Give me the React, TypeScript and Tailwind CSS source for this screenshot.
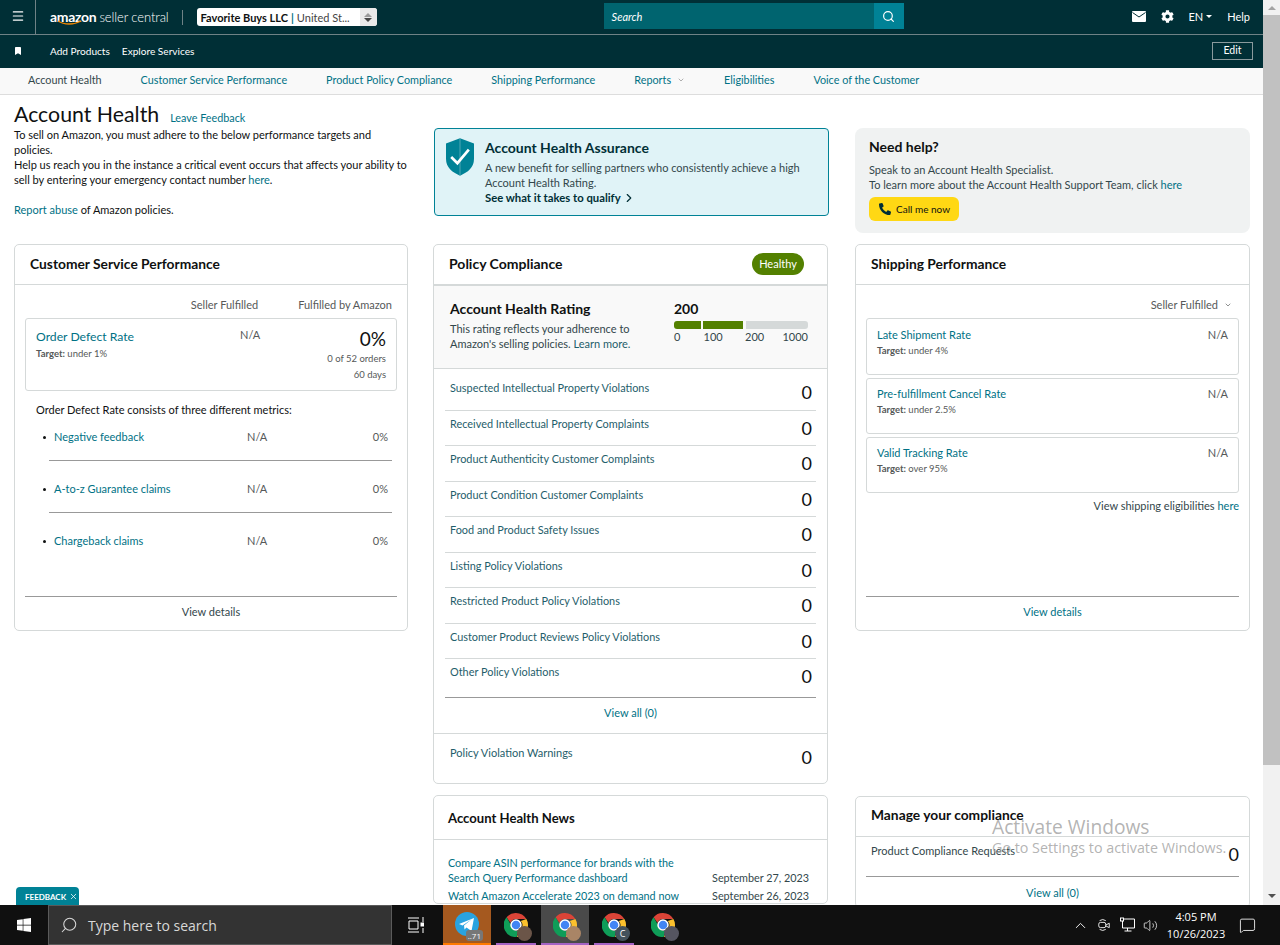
import { Menu, Search, ChevronRight, ChevronDown, ChevronUp, MessageSquare, Volume2, X } from "lucide-react";
import { FaBookmark, FaCog, FaPhoneAlt, FaWindows } from "react-icons/fa";

const policyRows = [
  "Suspected Intellectual Property Violations",
  "Received Intellectual Property Complaints",
  "Product Authenticity Customer Complaints",
  "Product Condition Customer Complaints",
  "Food and Product Safety Issues",
  "Listing Policy Violations",
  "Restricted Product Policy Violations",
  "Customer Product Reviews Policy Violations",
  "Other Policy Violations",
];

const navItems = [
  "Customer Service Performance",
  "Product Policy Compliance",
  "Shipping Performance",
];

const metrics = ["Negative feedback", "A-to-z Guarantee claims", "Chargeback claims"];

const shipping = [
  { name: "Late Shipment Rate", target: "under 4%", box: "h-[57px] pt-[8px]" },
  { name: "Pre-fulfillment Cancel Rate", target: "under 2.5%", box: "h-[56px] pt-[7px]" },
  { name: "Valid Tracking Rate", target: "over 95%", box: "h-[56px] pt-[7px]" },
];

function ChromeIcon({ badge }: { badge: string }) {
  return (
    <div className="relative h-6 w-6">
      <svg viewBox="0 0 24 24" className="h-6 w-6">
        <path d="M12 0a12 12 0 0 1 10.4 6H12a6 6 0 0 0-5.6 3.8L2.6 4.2A12 12 0 0 1 12 0z" fill="#db4437" />
        <path d="M22.4 6A12 12 0 0 1 12.6 24l4.6-8.4A6 6 0 0 0 16.8 8z" fill="#fbc02d" />
        <path d="M12.6 24A12 12 0 0 1 2.6 4.2L7 12a6 6 0 0 0 7.4 5.7z" fill="#0f9d58" />
        <circle cx="12" cy="12" r="5" fill="#4285f4" stroke="#ffffff" strokeWidth="1.5" />
      </svg>
      <div className={`absolute -bottom-1 -right-1 flex h-[15px] w-[15px] items-center justify-center rounded-full text-[9px] text-white ${badge}`}>
        {badge === "bg-[#44525c]" ? "C" : ""}
      </div>
    </div>
  );
}

export default function App() {
  return (
    <div className="flex h-[945px] w-[1280px] flex-col overflow-hidden bg-white text-[11px] leading-[15px] text-[#0f1111] [font-family:Lato,sans-serif]">
      <div className="relative flex h-[905px] overflow-hidden">
        <div className="h-full w-[1263px] shrink-0 overflow-hidden">
          <header className="flex h-[35px] items-center border-b border-[#6f8286] bg-[#002f36] text-white">
            <div className="flex h-full w-[36px] items-center justify-center border-r border-[#6f8286] pb-[2px]">
              <Menu size={14} strokeWidth={2} />
            </div>
            <div className="relative ml-[14px] flex h-full items-center leading-none">
              <span className="text-[14px] font-bold tracking-[-0.3px]">amazon</span>
              <span className="ml-[3px] text-[13px] font-light tracking-[-0.1px]">seller central</span>
              <svg viewBox="0 0 26 6" className="absolute left-[7px] top-[20px] h-[6px] w-[26px]">
                <path d="M1 1c6 4 16 4 23 0" fill="none" stroke="#f08804" strokeWidth="1.3" />
              </svg>
            </div>
            <div className="ml-[13px] h-[15px] w-px bg-[#6f8286]" />
            <div className="ml-[14px] flex h-[18px] w-[180px] items-center overflow-hidden rounded-[3px] bg-white pl-[4px] text-[11px] text-[#0f1111]">
              <span className="font-bold">Favorite Buys LLC</span>
              <span className="mx-[3px] font-bold text-[#007185]">|</span>
              <span className="text-[#444]">United St...</span>
              <div className="ml-auto flex h-full w-[17px] flex-col items-center justify-center gap-[1px] bg-[#e9e9e9] text-[#555]">
                <div className="h-0 w-0 border-x-[4px] border-b-[4px] border-x-transparent border-b-[#999]" />
                <div className="h-0 w-0 border-x-[4px] border-t-[4px] border-x-transparent border-t-[#444]" />
              </div>
            </div>
            <div className="mb-[2px] ml-[227px] flex h-[26px] w-[300px] items-center">
              <div className="flex h-full w-[270px] items-center bg-[#00646f] pl-[8px] text-[11px] italic text-white">
                Search
              </div>
              <div className="flex h-full w-[30px] items-center justify-center bg-[#008296]">
                <Search size={13} strokeWidth={2.2} />
              </div>
            </div>
            <div className="ml-auto mr-[13px] flex items-center pb-[2px] text-[11px]">
              <svg viewBox="0 0 14 11" className="h-[11px] w-[14px]">
                <rect width="14" height="11" rx="1" fill="#ffffff" />
                <path d="M0.5 1.5 7 6l6.500-4.500" fill="none" stroke="#002f36" strokeWidth="1" />
              </svg>
              <FaCog size={13} className="ml-[15px]" />
              <span className="ml-[14px]">EN</span>
              <div className="ml-[3px] h-0 w-0 border-x-[3.500px] border-t-[3.500px] border-x-transparent border-t-white" />
              <span className="ml-[15px]">Help</span>
            </div>
          </header>

          <div className="flex h-[33px] items-center bg-[#002f36] pb-[1px] text-[10.100px] text-white">
            <FaBookmark size={8} className="ml-[14px]" />
            <span className="ml-[28px]">Add Products</span>
            <span className="ml-[12px]">Explore Services</span>
            <button className="mb-[1px] ml-auto mr-[10px] flex h-[18px] w-[41px] items-center justify-center border border-[#8a9a9d] text-[10.500px] text-white">
              Edit
            </button>
          </div>

          <nav className="flex h-[27px] items-center border-b border-[#dddddd] bg-[#f9f9f9] pb-[3px] pl-[28px] text-[10.800px] text-[#007185]">
            <span className="text-[#33474b]">Account Health</span>
            {navItems.map((item) => (
              <span key={item} className="ml-[39px]">{item}</span>
            ))}
            <span className="ml-[39px] flex items-center">
              Reports
              <ChevronDown size={8} className="ml-[6px] text-[#888]" />
            </span>
            <span className="ml-[39px]">Eligibilities</span>
            <span className="ml-[39px]">Voice of the Customer</span>
          </nav>

          <div className="flex pl-[14px]">
            <div className="w-[394px] shrink-0">
              <div className="h-[149px] pt-[6px]">
                <div className="flex items-baseline">
                  <h1 className="text-[21.300px] leading-[26px]">Account Health</h1>
                  <span className="ml-[11px] text-[10.800px] text-[#007185]">Leave Feedback</span>
                </div>
                <p>To sell on Amazon, you must adhere to the below performance targets and policies.</p>
                <p>
                  Help us reach you in the instance a critical event occurs that affects your ability to sell by entering your emergency contact number <span className="text-[#007185]">here</span>.
                </p>
                <p className="mt-[15px]"><span className="text-[#007185]">Report abuse</span> of Amazon policies.</p>
              </div>

              <section className="flex h-[387px] flex-col rounded-[5px] border border-[#d5d9d9]">
                <div className="flex h-[40px] shrink-0 items-center border-b border-[#d5d9d9] pb-[2px] pl-[15px] text-[13.800px] font-bold">
                  Customer Service Performance
                </div>
                <div className="flex flex-1 flex-col px-[10px]">
                  <div className="flex h-[33px] items-center justify-end pr-[5px] pt-[6px] text-[#565959]">
                    <span>Seller Fulfilled</span>
                    <span className="ml-[40px]">Fulfilled by Amazon</span>
                  </div>
                  <div className="flex h-[73px] rounded-[3px] border border-[#d5d9d9] pl-[10px] pr-[10px]">
                    <div className="w-[204px] pt-[9px]">
                      <div className="text-[12.200px] leading-[17px] text-[#007185]">Order Defect Rate</div>
                      <div className="mt-[3px] text-[9.500px] leading-[12px] text-[#565959]"><span className="font-bold">Target:</span> under 1%</div>
                    </div>
                    <div className="flex-1 pt-[8px] text-[#565959]">N/A</div>
                    <div className="pt-[8px] text-right text-[9.500px] leading-[16px] text-[#565959]">
                      <div className="text-[19px] leading-[24px] text-[#0f1111]">0%</div>
                      <div>0 of 52 orders</div>
                      <div>60 days</div>
                    </div>
                  </div>
                  <div className="mt-[11px] pl-[11px]">Order Defect Rate consists of three different metrics:</div>
                  <ul className="mt-[12px]">
                    {metrics.map((m, i) => (
                      <li key={m} className="flex h-[52px] items-start pr-[5px]">
                        <div className="ml-[18px] mt-[7px] h-[3px] w-[3px] rounded-full bg-[#0f1111]" />
                        <div className={`ml-[3px] flex h-[32px] flex-1 pl-[5px] pr-[4px] ${i < 2 ? "border-b border-[#999]" : ""}`}>
                          <span className="w-[193px] text-[#007185]">{m}</span>
                          <span className="w-[125px] text-[#565959]">N/A</span>
                          <span className="flex-1 text-right text-[#565959]">0%</span>
                        </div>
                      </li>
                    ))}
                  </ul>
                  <div className="mt-auto flex h-[34px] items-center justify-center border-t border-[#999] pb-[4px] text-[#33474b]">View details</div>
                </div>
              </section>
            </div>

            <div className="ml-[25px] w-[395px] shrink-0">
              <div className="-mr-[1px] ml-[1px] mt-[33px] flex h-[88px] rounded-[4px] border border-[#008296] bg-[#e0f3f7] pl-[11px] pt-[9px]">
                <svg viewBox="0 0 27 36" className="h-[38px] w-[28px] shrink-0">
                  <path d="M13.500 0 27 5v15c0 8-6 13-13.500 16C6 33 0 28 0 20V5z" fill="#008296" />
                  <path d="M13.500 0v36" stroke="#7fc0ca" strokeWidth="0.6" />
                  <path d="M5 18l6 6 11-13" fill="none" stroke="#ffffff" strokeWidth="2.600" />
                </svg>
                <div className="ml-[11px]">
                  <div className="text-[14px] font-bold leading-[19px] text-[#002f36]">Account Health Assurance</div>
                  <p className="mt-[3px] text-[#33474b]">A new benefit for selling partners who consistently achieve a high Account Health Rating.</p>
                  <div className="flex items-center text-[11.300px] font-bold text-[#002f36]">
                    See what it takes to qualify
                    <ChevronRight size={14} className="ml-[1px]" />
                  </div>
                </div>
              </div>

              <section className="mt-[28px] flex h-[540px] flex-col rounded-[5px] border border-[#d5d9d9]">
                <div className="flex h-[41px] shrink-0 items-center justify-between border-b-2 border-[#d5d9d9] pb-[2px] pl-[15px] pr-[23px]">
                  <span className="text-[14px] font-bold">Policy Compliance</span>
                  <span className="flex h-[22px] w-[52px] items-center justify-center rounded-full bg-[#538000] text-white">Healthy</span>
                </div>
                <div className="flex h-[83px] shrink-0 border-b border-[#d5d9d9] bg-[#f9f9f9] pl-[16px] pt-[13px]">
                  <div className="w-[224px]">
                    <div className="text-[14px] font-bold leading-[19px]">Account Health Rating</div>
                    <p className="mt-[3px] w-[195px] text-[#33474b]">This rating reflects your adherence to Amazon&apos;s selling policies. <span className="text-[#1f5e6b]">Learn more.</span></p>
                  </div>
                  <div className="w-[134px]">
                    <div className="text-[14px] font-bold leading-[19px]">200</div>
                    <div className="mt-[3px] flex h-[8px] gap-[2px]">
                      <div className="w-[27px] rounded-l-[3px] bg-[#538000]" />
                      <div className="w-[40px] bg-[#538000]" />
                      <div className="ml-[1px] flex-1 rounded-r-[3px] bg-[#d5d9d9]" />
                    </div>
                    <div className="flex text-[#33474b]">
                      <span className="w-[30px]">0</span>
                      <span className="w-[42px]">100</span>
                      <span className="w-[38px]">200</span>
                      <span>1000</span>
                    </div>
                  </div>
                </div>
                <div className="mx-[11px] mt-[6px] border-b border-[#999]">
                  {policyRows.map((row, i) => (
                    <div key={row} className={`flex h-[35.500px] items-start justify-between pl-[5px] ${i < 8 ? "border-b border-[#d5d9d9]" : ""}`}>
                      <span className="pt-[5px] text-[10.900px] text-[#1f5e6b]">{row}</span>
                      <span className="pr-[4px] pt-[7px] text-[18px] leading-[20px]">0</span>
                    </div>
                  ))}
                  <div className="h-[2px]" />
                </div>
                <div className="flex h-[36px] shrink-0 items-center justify-center border-b border-[#d5d9d9] pb-[6px] text-[#007185]">View all (0)</div>
                <div className="flex flex-1 items-start justify-between pl-[16px] pr-[15px]">
                  <span className="pt-[11px] text-[#1f5e6b]">Policy Violation Warnings</span>
                  <span className="pt-[13px] text-[18px] leading-[20px]">0</span>
                </div>
              </section>

              <section className="mt-[11px] rounded-[5px] border border-[#d5d9d9]">
                <div className="flex h-[44px] items-center border-b border-[#d5d9d9] pl-[14px] pt-[2px] text-[13.100px] font-bold">Account Health News</div>
                <div className="px-[14px] pt-[15px] text-[10.800px] text-[#007185]">
                  <div className="flex items-end justify-between">
                    <span className="w-[240px]">Compare ASIN performance for brands with the Search Query Performance dashboard</span>
                    <span className="mr-[4px] text-[#33474b]">September 27, 2023</span>
                  </div>
                  <div className="mt-[3px] flex justify-between">
                    <span>Watch Amazon Accelerate 2023 on demand now</span>
                    <span className="mr-[4px] text-[#33474b]">September 26, 2023</span>
                  </div>
                </div>
              </section>
            </div>

            <div className="ml-[27px] w-[395px] shrink-0">
              <div className="mt-[33px] h-[105px] rounded-[8px] bg-[#f0f2f2] pl-[14px] pt-[9px] text-[#0f1111]">
                <div className="text-[14px] font-bold leading-[19px]">Need help?</div>
                <p className="mt-[6px] text-[#33474b]">Speak to an Account Health Specialist.</p>
                <p className="text-[#33474b]">To learn more about the Account Health Support Team, click <span className="text-[#007185]">here</span></p>
                <button className="mt-[5px] flex h-[24px] w-[90px] items-center rounded-[6px] bg-[#ffd814] pl-[10px] text-[10px] text-[#0f1111]">
                  <FaPhoneAlt size={12} className="text-[#002f36]" />
                  <span className="ml-[5px]">Call me now</span>
                </button>
              </div>

              <section className="mt-[11px] flex h-[387px] flex-col rounded-[5px] border border-[#d5d9d9]">
                <div className="flex h-[40px] shrink-0 items-center border-b border-[#d5d9d9] pb-[2px] pl-[15px] text-[13.800px] font-bold">Shipping Performance</div>
                <div className="flex flex-1 flex-col px-[10px]">
                  <div className="flex h-[33px] items-center justify-end pr-[7px] pt-[6px] text-[#565959]">
                    Seller Fulfilled
                    <ChevronDown size={8} className="ml-[6px]" />
                  </div>
                  <div className="flex flex-col gap-[3px]">
                    {shipping.map((s) => (
                      <div key={s.name} className={`flex justify-between rounded-[3px] border border-[#d5d9d9] pl-[10px] pr-[10px] ${s.box}`}>
                        <div>
                          <div className="text-[#007185]">{s.name}</div>
                          <div className="mt-[3px] text-[9.500px] leading-[12px] text-[#565959]"><span className="font-bold">Target:</span> {s.target}</div>
                        </div>
                        <span className="text-[#565959]">N/A</span>
                      </div>
                    ))}
                  </div>
                  <div className="mt-[5px] text-right text-[#33474b]">View shipping eligibilities <span className="text-[#007185]">here</span></div>
                  <div className="mt-auto flex h-[34px] items-center justify-center border-t border-[#999] pb-[4px] text-[#007185]">View details</div>
                </div>
              </section>

              <section className="mt-[165px] rounded-[5px] border border-[#d5d9d9]">
                <div className="flex h-[40px] items-center border-b border-[#d5d9d9] pb-[4px] pl-[15px] text-[13.800px] font-bold">Manage your compliance</div>
                <div className="px-[10px]">
                  <div className="flex h-[40px] items-start justify-between border-b border-[#999] pl-[5px]">
                    <span className="pt-[6px] text-[#33474b]">Product Compliance Requests</span>
                    <span className="pt-[7px] text-[18px] leading-[20px]">0</span>
                  </div>
                  <div className="flex h-[30px] items-center justify-center text-[#007185]">View all (0)</div>
                </div>
              </section>
            </div>
          </div>
        </div>

        <div className="flex h-full w-[17px] shrink-0 flex-col bg-[#f1f1f1]">
          <div className="flex h-[15px] items-center justify-center">
            <div className="h-0 w-0 border-x-[4px] border-b-[4px] border-x-transparent border-b-[#a3a3a3]" />
          </div>
          <div className="h-[750px] bg-[#c1c1c1]" />
          <div className="mt-auto flex h-[19px] items-center justify-center">
            <div className="h-0 w-0 border-x-[4px] border-t-[4px] border-x-transparent border-t-[#505050]" />
          </div>
        </div>

        <div className="absolute bottom-0 left-[16px] flex h-[18px] w-[63px] items-center rounded-t-[4px] bg-[#008296] pl-[9px] pt-[1px] text-[8px] font-bold leading-none text-white">
          FEEDBACK
          <X size={9} className="ml-[3px]" />
        </div>

        <div className="absolute left-[992px] top-[815px] text-[19.200px] leading-[24px] text-[#a0a0a0]/80 [font-family:'Open_Sans',sans-serif]">Activate Windows</div>
        <div className="absolute left-[992px] top-[839px] text-[14.300px] leading-[18px] text-[#a0a0a0]/80 [font-family:'Open_Sans',sans-serif]">Go to Settings to activate Windows.</div>
      </div>

      <footer className="flex h-[40px] shrink-0 items-center bg-[#101010] text-white [font-family:'Open_Sans',sans-serif]">
        <div className="flex h-full w-[48px] items-center justify-center">
          <FaWindows size={16} />
        </div>
        <div className="flex h-full w-[344px] items-center border border-[#5a5a5a] bg-[#333333] pl-[11px] text-[14px] text-[#d8d8d8]">
          <Search size={18} strokeWidth={1.4} className="-scale-x-100" />
          <span className="ml-[10px]">Type here to search</span>
        </div>
        <div className="flex h-full w-[51px] items-center justify-center pr-[3px]">
          <svg viewBox="0 0 16 16" className="h-[16px] w-[16px]" fill="none" stroke="#ffffff" strokeWidth="1">
            <path d="M0 1h11M0 15h11M1 4h9v8H1zM15 0v5M15 11v5" />
            <rect x="13" y="6" width="3" height="3" fill="#ffffff" />
          </svg>
        </div>
        <div className="flex h-full w-[48px] flex-col items-center justify-center border-b-[2px] border-[#ff7a00] bg-[#a5591f]">
          <div className="relative h-6 w-6">
            <svg viewBox="0 0 24 24" className="h-6 w-6">
              <circle cx="12" cy="12" r="12" fill="#2aa3e0" />
              <path d="M4 12l15-6-2.500 13-5-3.500-2 2-.5-4L17 7 7.500 13.500z" fill="#ffffff" />
            </svg>
            <div className="absolute -bottom-[5px] -right-[4px] rounded-[3px] bg-[#777] px-[2px] text-[8px] leading-[11px] text-white">..71</div>
          </div>
        </div>
        <div className="relative ml-[1px] flex h-full w-[48px] items-center justify-center">
          <ChromeIcon badge="bg-[#6b5548]" />
          <div className="absolute bottom-0 left-[4px] h-[2px] w-[40px] bg-[#a463c4]" />
        </div>
        <div className="relative ml-[1px] flex h-full w-[48px] items-center justify-center bg-[#4a4a4a]">
          <ChromeIcon badge="bg-[#a98566]" />
          <div className="absolute bottom-0 left-0 h-[2px] w-[48px] bg-[#a463c4]" />
        </div>
        <div className="relative ml-[1px] flex h-full w-[48px] items-center justify-center">
          <ChromeIcon badge="bg-[#44525c]" />
          <div className="absolute bottom-0 left-[4px] h-[2px] w-[40px] bg-[#a463c4]" />
        </div>
        <div className="ml-[1px] flex h-full w-[48px] items-center justify-center">
          <ChromeIcon badge="bg-[#555560]" />
        </div>
        <div className="ml-auto flex h-full items-center">
          <ChevronUp size={17} strokeWidth={1.3} />
          <svg viewBox="0 0 16 16" className="ml-[8px] h-[16px] w-[14px]" fill="none" stroke="#ffffff" strokeWidth="1">
            <path d="M3 3a6 6 0 0 1 7 0M3 13a6 6 0 0 0 7 0" />
            <rect x="2" y="5" width="8" height="6" rx="2" />
            <path d="M10 8l4-2v5l-4-2" />
          </svg>
          <svg viewBox="0 0 16 16" className="ml-[8px] h-[16px] w-[17px]" fill="none" stroke="#ffffff" strokeWidth="1">
            <path d="M3 2h12v9H3zM8 11v3M5 14h7" />
            <rect x="1" y="1" width="3" height="3" fill="#101010" />
          </svg>
          <Volume2 size={15} strokeWidth={1.2} className="ml-[7px]" />
          <div className="ml-[4px] w-[68px] text-center text-[11px] leading-[17px]">
            <div>4:05 PM</div>
            <div>10/26/2023</div>
          </div>
          <div className="mr-[15px] flex h-full w-[35px] items-center justify-center">
            <MessageSquare size={17} strokeWidth={1.2} />
          </div>
        </div>
      </footer>
    </div>
  );
}
